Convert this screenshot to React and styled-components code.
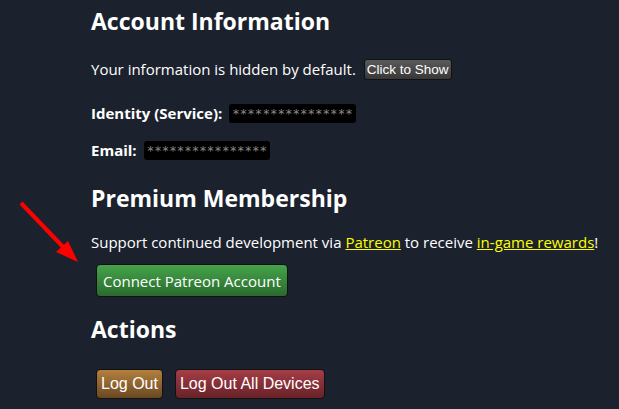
import styled, {createGlobalStyle} from 'styled-components';

const GlobalStyle = createGlobalStyle`
    html, body {
        margin: 0;
        padding: 0;
        background: #1b222d;
    }
    body {
        font-family: "Open Sans", "Noto Sans", sans-serif;
        color: #ffffff;
    }
`

const Page = styled.div`
    position: relative;
    width: 619px;
    height: 409px;
    overflow: hidden;
    padding-left: 91px;
    box-sizing: border-box;
`

const Heading = styled.h2`
    font-size: 23px;
    font-weight: 700;
    margin: 0;
    margin-top: ${(p) => p.$top || 0}px;
    height: 42px;
    line-height: 42px;
`

const Text = styled.div`
    font-size: 15px;
    line-height: 22px;
    display: flex;
    align-items: center;
    gap: ${(p) => p.$gap || 8}px;
    margin-top: ${(p) => p.$top || 0}px;
`

const Label = styled.span`
    font-weight: 700;
`

const Masked = styled.span`
    background: #000;
    color: #8a8a8a;
    font-family: "DejaVu Sans Mono", monospace;
    font-size: 12.5px;
    border-radius: 3px;
    padding: 0 3px;
    height: 19px;
    line-height: 20px;
`

const Link = styled.a`
    color: #ffff00;
    text-decoration: underline;
`

const SmallButton = styled.button`
    font-family: "Liberation Sans", Arial, sans-serif;
    font-size: 13.5px;
    color: #fff;
    background: linear-gradient(#5a5a5a, #383838);
    border: 1px solid #111;
    border-radius: 3px;
    padding: 0 2px;
    height: 21px;
`

const Row = styled.div`
    display: flex;
    gap: 12px;
    margin-top: ${(p) => p.$top || 0}px;
    margin-left: 5px;
`

const ActionButton = styled.button`
    font-family: ${(p) => p.$segoe ? '"Open Sans", "Noto Sans", sans-serif' : '"Liberation Sans", Arial, sans-serif'};
    font-size: ${(p) => p.$segoe ? 15 : 16}px;
    color: #fff;
    border: 1px solid #111;
    border-radius: 4px;
    padding: 0 ${(p) => p.$segoe ? 6 : 4}px;
    height: ${(p) => p.$h || 30}px;
    background: ${(p) => p.$bg};
`

const Arrow = styled.svg`
    position: absolute;
    left: 18px;
    top: 200px;
`

const App = () => {
    return (
        <Page>
            <GlobalStyle/>
            <Heading>Account Information</Heading>
            <Text $top={16}>
                <span>Your information is hidden by default.</span>
                <SmallButton>Click to Show</SmallButton>
            </Text>
            <Text $top={22} $gap={7}>
                <Label>Identity (Service):</Label>
                <Masked>****************</Masked>
            </Text>
            <Text $top={15} $gap={7}>
                <Label>Email:</Label>
                <Masked>****************</Masked>
            </Text>
            <Heading $top={16}>Premium Membership</Heading>
            <Text $top={12}>
                <span>Support continued development via <Link>Patreon</Link> to receive <Link>in-game rewards</Link>!</span>
            </Text>
            <Row $top={11}>
                <ActionButton $segoe $h={33} $bg="linear-gradient(#45a34a, #2a6b2e)">Connect Patreon Account</ActionButton>
            </Row>
            <Heading $top={11}>Actions</Heading>
            <Row $top={19}>
                <ActionButton $bg="linear-gradient(#b3803e, #694821)">Log Out</ActionButton>
                <ActionButton $bg="linear-gradient(#a53e47, #682128)">Log Out All Devices</ActionButton>
            </Row>
            <Arrow width="70" height="70" viewBox="0 0 70 70">
                <line x1="3" y1="3" x2="48" y2="50" stroke="#ff0000" strokeWidth="4"/>
                <polygon points="60,62 38,52 50,41" fill="#ff0000"/>
            </Arrow>
        </Page>
    );
}

export default App;
